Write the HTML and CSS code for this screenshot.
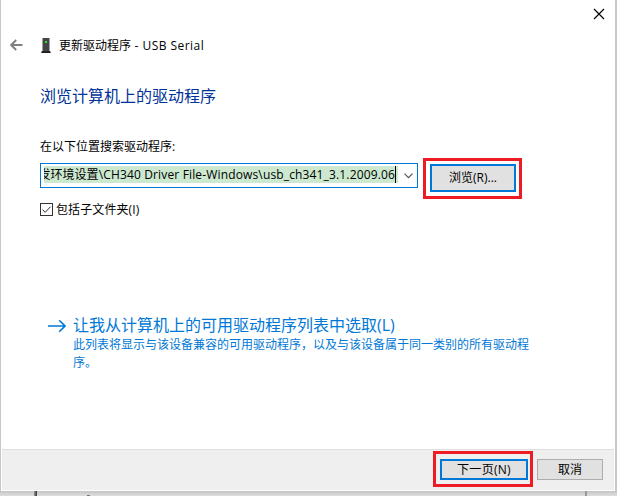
FILE: index.html
```html
<!DOCTYPE html>
<html lang="zh-CN">
<head>
<meta charset="utf-8">
<title>更新驱动程序 - USB Serial</title>
<link rel="stylesheet" href="styles.css">
</head>
<body>
<main class="dialog">
  <div class="titlebar">
    <svg class="close" width="12" height="12" viewBox="0 0 12 12"><path d="M1 1l10 10M11 1L1 11"/></svg>
  </div>
  <header class="header">
    <svg class="back" width="13" height="12" viewBox="0 0 13 12"><path d="M12.5 6H1.5M6.2 1L1.2 6l5 5"/></svg>
    <svg class="device" width="10" height="15" viewBox="0 0 10 15">
      <path d="M1.5 0h7v13h-7z" fill="#454545"/>
      <path d="M1 13h8l1 2H0z" fill="#222"/>
      <path d="M4 3h2v2H4z" fill="#20ee20"/>
    </svg>
    <span class="title">更新驱动程序<span class="title-device"> - USB Serial</span></span>
  </header>
  <section class="content">
    <h1 class="heading">浏览计算机上的驱动程序</h1>
    <label class="label">在以下位置搜索驱动程序:</label>
    <div class="path-row">
      <div class="combo">
        <div class="selection"><span class="path">发环境设置<span class="path-latin">\CH340 Driver File-Windows\usb_ch341_3.1.2009.06</span></span></div>
        <svg class="chevron" width="9" height="6" viewBox="0 0 9 6"><path d="M.5 .7l4 4 4-4"/></svg>
      </div>
      <div class="highlight highlight-browse"><button class="button primary browse">浏览(R)...</button></div>
    </div>
    <div class="check-row">
      <svg class="checkbox" width="13" height="13" viewBox="0 0 13 13"><rect x=".5" y=".5" width="12" height="12"/><path d="M2.5 6.5l2.7 2.8 5.3-5.6"/></svg>
      <span class="check-text">包括子文件夹(I)</span>
    </div>
    <div class="command">
      <svg class="arrow" width="18" height="14" viewBox="0 0 18 14"><path d="M0 7h17M11.2 1.2L17 7l-5.8 5.8"/></svg>
      <div class="command-body">
        <div class="command-title">让我从计算机上的可用驱动程序列表中选取(L)</div>
        <div class="command-note">此列表将显示与该设备兼容的可用驱动程序，以及与该设备属于同一类别的所有驱动程序。</div>
      </div>
    </div>
  </section>
  <footer class="footer">
    <div class="highlight highlight-next"><button class="button primary next">下一页(N)</button></div>
    <button class="button cancel">取消</button>
  </footer>
</main>
<div class="backdrop"><i class="backdrop-edge"></i><i class="backdrop-mark"></i><i class="backdrop-line"></i></div>
</body>
</html>
```
FILE: styles.css
```css
* { box-sizing: border-box; }
body {
  margin: 0;
  width: 617px;
  height: 496px;
  overflow: hidden;
  background: #c9c9c9;
  color: #000;
  font: 12px/16px "Open Sans", "Noto Sans CJK SC", sans-serif;
}
svg { display: block; flex: none; fill: none; }
.dialog {
  display: flex;
  flex-direction: column;
  width: 614px;
  height: 491px;
  margin-left: 1px;
  background: #fff;
}
.titlebar { display: flex; justify-content: flex-end; height: 37px; padding: 8px 10px 0 0; }
.close { stroke: #000; stroke-width: 1.2; }
.header { display: flex; align-items: center; height: 17px; padding-left: 9px; }
.back { margin-top: -2px; stroke: #808080; stroke-width: 1.9; }
.device { margin-left: 18px; }
.title { margin-left: 8px; white-space: pre; }
.title-device { letter-spacing: .45px; }
.content { display: flex; flex-direction: column; height: 395px; padding-left: 39px; }
.heading { margin: 30px 0 0; font-size: 16px; line-height: 24px; font-weight: 400; color: #003399; }
.label { margin-top: 31px; height: 16px; }
.path-row { display: flex; align-items: flex-start; margin-top: 3px; height: 41px; }
.combo {
  display: flex;
  align-items: center;
  width: 378px;
  height: 25px;
  margin-top: 5px;
  padding-left: 3px;
  border: 1px solid #0078d7;
}
.selection {
  display: flex;
  justify-content: flex-end;
  width: 354px;
  height: 17px;
  margin-top: -3px;
  padding-right: 2px;
  overflow: hidden;
  background: #cce8cf;
}
.path { flex: none; border-right: 1px solid #000; line-height: 17px; white-space: pre; }
.path-latin { letter-spacing: .15px; }
.chevron { margin-left: 6px; stroke: #555; stroke-width: 1.2; }
.highlight { display: flex; border: 3px solid #ed1c24; }
.highlight-browse { width: 99px; height: 41px; margin-left: 5px; padding: 3px 0 0 4px; }
.button {
  margin: 0;
  padding: 0;
  border: 1px solid #adadad;
  background: #e1e1e1;
  color: #000;
  font: inherit;
  text-align: center;
}
.primary { border: 2px solid #0078d7; }
.browse { width: 86px; height: 28px; }
.check-row { display: flex; align-items: center; height: 16px; margin-top: 3px; }
.checkbox { margin-top: -1px; stroke: #333; }
.check-text { margin-left: 3px; letter-spacing: .1px; }
.command { display: flex; margin: 97px 0 0 8px; color: #0078d7; }
.arrow { margin-top: 4px; stroke: #0078d7; stroke-width: 1.6; }
.command-body { width: 470px; margin-left: 7px; }
.command-title { font-size: 16px; line-height: 20px; white-space: nowrap; }
.command-note { width: 460px; margin-top: 1px; line-height: 18px; }
.footer {
  display: flex;
  align-items: flex-start;
  height: 41px;
  margin: 0 1px;
  padding: 1px 0 0 431px;
  border-top: 1px solid #dfdfdf;
  background: #efefef;
}
.highlight-next { width: 100px; height: 36px; padding: 5px 0 0 4px; }
.button.next { width: 88px; height: 21px; line-height: 17px; letter-spacing: .3px; }
.cancel { width: 66px; height: 21px; margin: 8px 0 0 4px; line-height: 19px; }
.backdrop {
  display: flex;
  align-items: flex-start;
  height: 5px;
  background: linear-gradient(#c4c4c4, #dedede);
}
.backdrop-edge { width: 3px; height: 5px; margin-left: 34px; background: linear-gradient(90deg, #999, #333); }
.backdrop-mark { width: 3px; height: 1px; margin: 4px 0 0 50px; background: #777; }
.backdrop-line { width: 2px; height: 5px; margin-left: 495px; background: #999; }
```
